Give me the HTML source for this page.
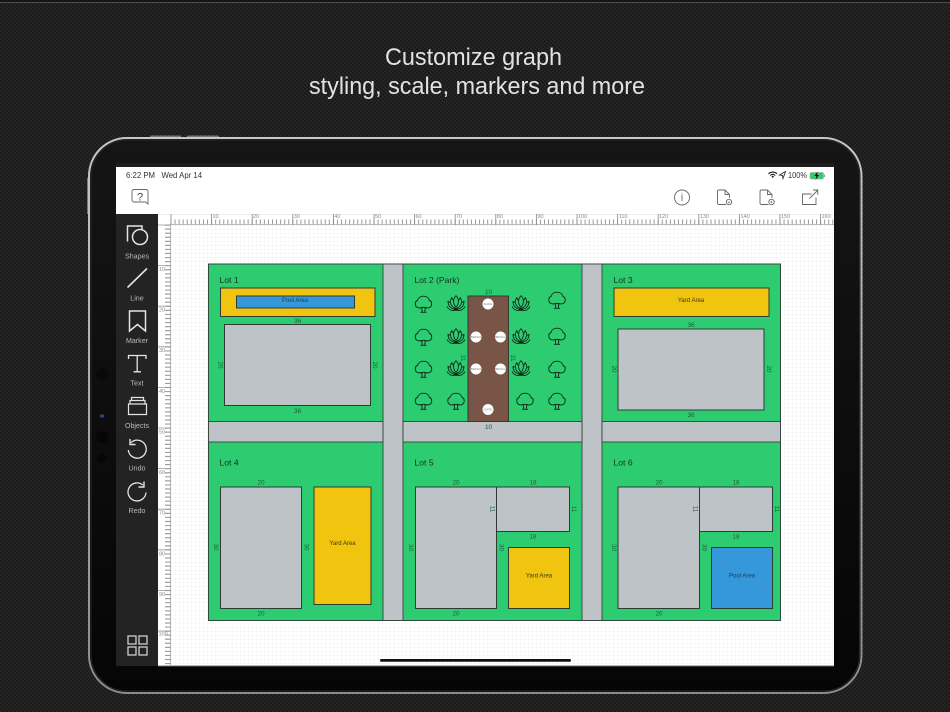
<!DOCTYPE html>
<html><head><meta charset="utf-8"><style>
html,body{margin:0;padding:0;background:#1f1f1f}
svg{display:block}
text{font-family:"Liberation Sans",sans-serif}
.d text{font-size:6.4px;fill:#1d5c3b;text-anchor:middle}
.r text{font-size:5.5px;fill:#8a8a8a}
.s text{font-size:7.1px;fill:#b9b9b9;text-anchor:middle}
.i{fill:none;stroke:#e4e4e4;stroke-width:1.3}
.t{fill:none;stroke:#666;stroke-width:.9}
.l{font-size:8.6px;fill:#1c2b22}
.p{stroke:#2e4a3c;stroke-width:1}
.c text{font-size:3px;fill:#777;text-anchor:middle}
</style></head><body>
<svg width="950" height="712" viewBox="0 0 950 712" xmlns="http://www.w3.org/2000/svg">
<defs>
<pattern id="bg" width="4" height="4" patternUnits="userSpaceOnUse"><rect width="4" height="4" fill="#252525"/><circle cx="1" cy="1" r="1" fill="#181818"/><circle cx="3" cy="3" r="1" fill="#181818"/></pattern>
<pattern id="grid" x="171" y="225" width="4.06" height="4.06" patternUnits="userSpaceOnUse"><rect width="4.06" height="4.06" fill="#fff"/><path d="M0 0H4.06M0 0V4.06" stroke="#f1f1f1" stroke-width=".8"/></pattern>
<linearGradient id="dev" x1="0" y1="0" x2="0" y2="1"><stop offset="0" stop-color="#151515"/><stop offset="1" stop-color="#050505"/></linearGradient>
<linearGradient id="rim" x1="0" y1="0" x2="0" y2="1"><stop offset="0" stop-color="#c8c8c8"/><stop offset="1" stop-color="#8c8c8c"/></linearGradient>
<g id="tree" fill="none" stroke="#10281a" stroke-width=".95"><path d="M-1.700 3.500C-5 4.600-8.200 3.400-8.200-.1-8.200-2-7.200-3.200-6-3.500-5.400-6.200-3-7.800 0-7.800 3-7.800 5.400-6.200 6-3.500 7.200-3.200 8.200-2 8.200-.1 8.200 3.400 5 4.600 1.700 3.500-.2 3.100-.2 3.100-1.700 3.500Z"/><path d="M-1.700 3.500-1.300 8.200M1.700 3.500 1.300 8.200M-3 8.300H3"/></g>
<g id="lotus" fill="none" stroke="#10281a" stroke-width=".9"><path d="M0-8.300C2.800-5.500 3.600-1 0 3.500-3.600-1-2.800-5.500 0-8.300ZM-2.700-3.400-4.200-6.400C-6-4-6-1-4.600 1.200-3.500 3-1.800 4 0 4.600 1.800 4 3.500 3 4.600 1.200 6-1 6-4 4.200-6.400L2.700-3.400M-5.700-1.800-8-2.500C-8 .5-6.400 3.200-3.800 4.500-2.400 5.200-1 5.200 0 4.800 1 5.200 2.400 5.200 3.800 4.500 6.400 3.200 8 .5 8-2.500L5.700-1.800M-9 2.400C-7.600 5.400-4.600 7-1.800 6.400M9 2.400C7.600 5.400 4.600 7 1.800 6.400"/><path d="M-2.200 5.800H2.200" stroke-width="2"/></g>
</defs>
<rect width="950" height="712" fill="url(#bg)"/>
<rect width="950" height="2" fill="#141414"/><rect y="2" width="950" height=".8" fill="#5a5a5a"/>
<text x="473.500" y="65" text-anchor="middle" font-size="24" fill="#e2e2e2" textLength="177" lengthAdjust="spacingAndGlyphs">Customize graph</text>
<text x="477" y="94" text-anchor="middle" font-size="24" fill="#e2e2e2" textLength="336" lengthAdjust="spacingAndGlyphs">styling, scale, markers and more</text>

<rect x="150" y="135.500" width="31" height="3" rx="1" fill="#777"/><rect x="187" y="135.500" width="32" height="3" rx="1" fill="#777"/>
<rect x="87" y="178" width="2" height="36" fill="#777"/>
<rect x="89" y="138" width="772.500" height="555" rx="38" fill="url(#dev)" stroke="url(#rim)" stroke-width="2"/>
<rect x="91" y="140" width="768.500" height="551" rx="36" fill="none" stroke="#2a2a2a" stroke-width="1"/>
<circle cx="102" cy="374" r="6" fill="#090909"/><circle cx="102" cy="437" r="6" fill="#060606"/><circle cx="102" cy="458" r="4.500" fill="#060606"/><rect x="100" y="414.500" width="4" height="3" fill="#23468c"/>

<rect x="116" y="163" width="718" height="5" fill="#1e1e1e"/>
<rect x="116" y="167" width="718" height="47" fill="#fff"/>
<rect x="116" y="214" width="42" height="452" fill="#232323"/>
<rect x="158" y="214" width="676" height="452" fill="#fff"/>
<rect x="171" y="225" width="663" height="441" fill="url(#grid)"/>
<rect x="158" y="665.500" width="676" height=".9" fill="#777"/>
<rect x="158" y="214" width="676" height="1" fill="#eee"/>

<!-- rulers -->
<path d="M171 224.500H834M170.500 225V666" stroke="#aaa" stroke-width=".8" fill="none"/>
<line x1="170.500" y1="222" x2="834" y2="222" stroke="#9a9a9a" stroke-width="5" stroke-dasharray="1 3.06"/>
<line x1="170.600" y1="219.500" x2="834" y2="219.500" stroke="#888" stroke-width="11" stroke-dasharray=".8 39.8"/>
<line x1="168" y1="224.500" x2="168" y2="666" stroke="#a0a0a0" stroke-width="6" stroke-dasharray="1.200 2.860"/>
<line x1="164.500" y1="224.600" x2="164.500" y2="666" stroke="#999" stroke-width="13" stroke-dasharray=".8 39.8"/>
<g class="r">
<text x="212.500" y="218">10</text><text x="253" y="218">20</text><text x="293.700" y="218">30</text><text x="334.300" y="218">40</text><text x="375" y="218">50</text><text x="415.500" y="218">60</text><text x="456" y="218">70</text><text x="496.800" y="218">80</text><text x="537.500" y="218">90</text><text x="578" y="218">100</text><text x="618.700" y="218">110</text><text x="659" y="218">120</text><text x="699.800" y="218">130</text><text x="740.500" y="218">140</text><text x="781" y="218">150</text><text x="821.500" y="218">160</text>
<text x="159" y="271">10</text><text x="159" y="311.600">20</text><text x="159" y="352">30</text><text x="159" y="392.800">40</text><text x="159" y="433.500">50</text><text x="159" y="474">60</text><text x="159" y="514.700">70</text><text x="159" y="555.300">80</text><text x="159" y="596">90</text><text x="158.500" y="635.500">100</text>
</g>

<!-- plan -->
<rect x="208.500" y="264" width="572" height="356.500" fill="#2ecc71" class="p"/>
<g fill="#bdc3c7" stroke="#3a3f3d" stroke-width=".9">
<rect x="383" y="264" width="20" height="356.500"/><rect x="582" y="264" width="20" height="356.500"/>
<rect x="208.500" y="421.500" width="174.500" height="20.500"/><rect x="403" y="421.500" width="179" height="20.500"/><rect x="602" y="421.500" width="178.500" height="20.500"/>
</g>
<g stroke="#2f3b35" stroke-width="1">
<rect x="220.500" y="288" width="154.500" height="28.500" fill="#f1c40f"/>
<rect x="236.500" y="296" width="118" height="12" fill="#3498db"/>
<rect x="224.500" y="324.500" width="146" height="81" fill="#bdc3c7"/>
<rect x="614" y="288" width="155" height="28.500" fill="#f1c40f"/>
<rect x="618" y="329" width="146" height="81" fill="#bdc3c7"/>
<rect x="220.500" y="487" width="81" height="121.500" fill="#bdc3c7"/>
<rect x="314" y="487" width="57" height="117.500" fill="#f1c40f"/>
<rect x="415.500" y="487" width="81" height="121.500" fill="#bdc3c7"/>
<rect x="496.500" y="487" width="73" height="44.500" fill="#bdc3c7"/>
<rect x="508.500" y="547.500" width="61" height="61" fill="#f1c40f"/>
<rect x="618" y="487" width="81.500" height="121.500" fill="#bdc3c7"/>
<rect x="699.500" y="487" width="73" height="44.500" fill="#bdc3c7"/>
<rect x="711.500" y="547.500" width="61" height="61" fill="#3498db"/>
<rect x="468" y="296" width="40.500" height="125.500" fill="#795548"/>
</g>
<text class="l" x="219.500" y="283">Lot 1</text><text class="l" x="414.500" y="283">Lot 2 (Park)</text><text class="l" x="613.500" y="283">Lot 3</text>
<text class="l" x="219.500" y="465.500">Lot 4</text><text class="l" x="414.500" y="465.500">Lot 5</text><text class="l" x="613.500" y="465.500">Lot 6</text>
<g font-size="6" fill="#3a3a1a" text-anchor="middle">
<text x="295" y="302" fill="#1c3a55">Pool Area</text><text x="691" y="302">Yard Area</text><text x="342.500" y="545">Yard Area</text><text x="539" y="577.500">Yard Area</text><text x="742" y="577.500" fill="#1c3a55">Pool Area</text>
</g>
<g class="d">
<text x="297.500" y="323">36</text><text x="297.500" y="413">36</text>
<text x="488.500" y="294">10</text><text x="488.500" y="429" fill="#333">10</text>
<text x="691" y="327">36</text><text x="691" y="417">36</text>
<text x="261" y="484.500">20</text><text x="261" y="615.500">20</text>
<text x="456" y="484.500">20</text><text x="533" y="484.500">18</text><text x="533" y="538.500">18</text><text x="456" y="615.500">20</text>
<text x="659" y="484.500">20</text><text x="736" y="484.500">18</text><text x="736" y="538.500">18</text><text x="659" y="615.500">20</text>
<text transform="translate(218.500 365) rotate(90)">20</text><text transform="translate(373 365) rotate(90)">20</text>
<text transform="translate(461 358) rotate(90)">31</text><text transform="translate(511 358) rotate(90)">31</text>
<text transform="translate(612 369) rotate(90)">20</text><text transform="translate(767 369) rotate(90)">20</text>
<text transform="translate(214 547) rotate(90)">30</text><text transform="translate(304.500 547) rotate(90)">30</text>
<text transform="translate(409 547.500) rotate(90)">30</text><text transform="translate(499.500 547.500) rotate(90)">30</text>
<text transform="translate(490.500 509) rotate(90)" fill="#333">11</text><text transform="translate(572 509) rotate(90)">11</text>
<text transform="translate(612 547.500) rotate(90)">30</text><text transform="translate(702.500 547.500) rotate(90)">30</text>
<text transform="translate(693.500 509) rotate(90)" fill="#333">11</text><text transform="translate(775 509) rotate(90)">11</text>
</g>
<use href="#tree" x="423.500" y="304"/><use href="#tree" x="423.500" y="337"/><use href="#tree" x="423.500" y="369"/><use href="#tree" x="423.500" y="401"/>
<use href="#tree" x="557" y="300"/><use href="#tree" x="557" y="336"/><use href="#tree" x="557" y="369"/><use href="#tree" x="557" y="401"/>
<use href="#tree" x="456" y="401"/><use href="#tree" x="525" y="401"/>
<use href="#lotus" x="456" y="304"/><use href="#lotus" x="456" y="337"/><use href="#lotus" x="456" y="369"/>
<use href="#lotus" x="521" y="304"/><use href="#lotus" x="521" y="337"/><use href="#lotus" x="521" y="369"/>
<g fill="#fff"><circle cx="488" cy="304" r="5.500"/><circle cx="476" cy="337" r="5.500"/><circle cx="500.500" cy="337" r="5.500"/><circle cx="476" cy="369" r="5.500"/><circle cx="500.500" cy="369" r="5.500"/><circle cx="488" cy="409.500" r="5.500"/></g>
<g class="c"><text x="488" y="305">SLIDE</text><text x="476" y="338">BENCH</text><text x="500.500" y="338">BENCH</text><text x="476" y="370">BENCH</text><text x="500.500" y="370">BENCH</text><text x="488" y="410.500">GATE</text></g>

<!-- sidebar -->
<g class="i">
<path d="M127.500 241.500V226H142V229" stroke-width="1.500"/><circle cx="140" cy="237" r="7.500" stroke-width="1.500"/>
<path d="M127.500 287.500 147 268.500" stroke-width="1.600"/>
<path d="M129.500 311H145.500V331L137.500 324.500 129.500 331Z" stroke-width="1.500"/>
<path d="M128.500 359V355.500H146V359M137.200 355.500V371.500M133.500 371.800H141"/>
<path d="M128.500 404H146.500V414.500H128.500ZM130 404V400.500H145V404M131.500 400.500V397.500H143.500V400.500" stroke-width="1.200"/>
<path d="M131 442.700A9 9 0 1 1 128.300 450"/><path d="M130 439V444.500H135.500" stroke-width="1.400"/>
<path d="M143 485.200A9 9 0 1 0 146 492.500"/><path d="M144 481.500V487H138.500" stroke-width="1.400"/>
<g stroke-width="1.300" stroke="#cfcfcf"><rect x="128" y="636" width="8" height="8"/><rect x="139" y="636" width="8" height="8"/><rect x="128" y="647" width="8" height="8"/><rect x="139" y="647" width="8" height="8"/></g>
</g>
<g class="s"><text x="137" y="258.500">Shapes</text><text x="137" y="300.500">Line</text><text x="137" y="343">Marker</text><text x="137" y="385.500">Text</text><text x="137" y="428">Objects</text><text x="137" y="470.500">Undo</text><text x="137" y="513">Redo</text></g>

<!-- top bar -->
<text x="126" y="178" font-size="7.800" fill="#333">6:22 PM</text><text x="161.500" y="178" font-size="7.800" fill="#333">Wed Apr 14</text>
<text x="788" y="178" font-size="7.800" fill="#333" textLength="19" lengthAdjust="spacingAndGlyphs">100%</text>
<path d="M768.500 173.800C771 171.500 774.500 171.500 777 173.800M770.200 175.500C771.800 174 773.700 174 775.300 175.500" fill="none" stroke="#222" stroke-width="1.100"/><path d="M771.500 176.500 772.800 175.500 774 176.500 772.800 178Z" fill="#222"/>
<path d="M785.500 171.500 779.500 175 782.500 175.500 783 178.500Z" fill="none" stroke="#333" stroke-width=".9"/>
<rect x="810" y="172.500" width="13.500" height="6.500" rx="1.500" fill="#2ecc71" stroke="#aaa" stroke-width=".7"/><rect x="824" y="174.500" width="1" height="2.500" fill="#999"/><path d="M817.500 171.500 814.500 176H816.500L815.500 180 819 175H817Z" fill="#111"/>
<g class="t">
<path d="M135 190H146A2 2 0 0 1 148 192V204.500L145.500 202.500H134A2 2 0 0 1 132 200.500V192A2 2 0 0 1 134 190Z" transform="translate(0 -.5)"/>
<circle cx="682" cy="197.500" r="7.500"/><path d="M682 194.500V201"/><path d="M682 192.800V193.500"/>
<path d="M726 204.500H719A1.500 1.500 0 0 1 717.500 203V191.500A1.500 1.500 0 0 1 719 190H725L729.500 194.500V198M725 190V194.500H729.500"/><circle cx="729" cy="202" r="2.700"/><path d="M727.900 202 728.800 203 730.200 201.200" stroke-width=".6"/>
<path d="M768.500 204.500H761.500A1.500 1.500 0 0 1 760 203V191.500A1.500 1.500 0 0 1 761.500 190H767.500L772 194.500V198M767.500 190V194.500H772"/><circle cx="771.500" cy="202" r="2.700"/><circle cx="771.500" cy="202" r=".9" fill="#666" stroke="none"/>
<path d="M811.500 194H802.500V204.500H816V197.500M809.500 198.500 817.500 190.500M813 190H817.800V195"/>
</g>
<text x="140" y="200.500" font-size="11" fill="#444" text-anchor="middle">?</text>
<rect x="380" y="659" width="191" height="2.800" rx="1.400" fill="#111"/>
</svg>
</body></html>
